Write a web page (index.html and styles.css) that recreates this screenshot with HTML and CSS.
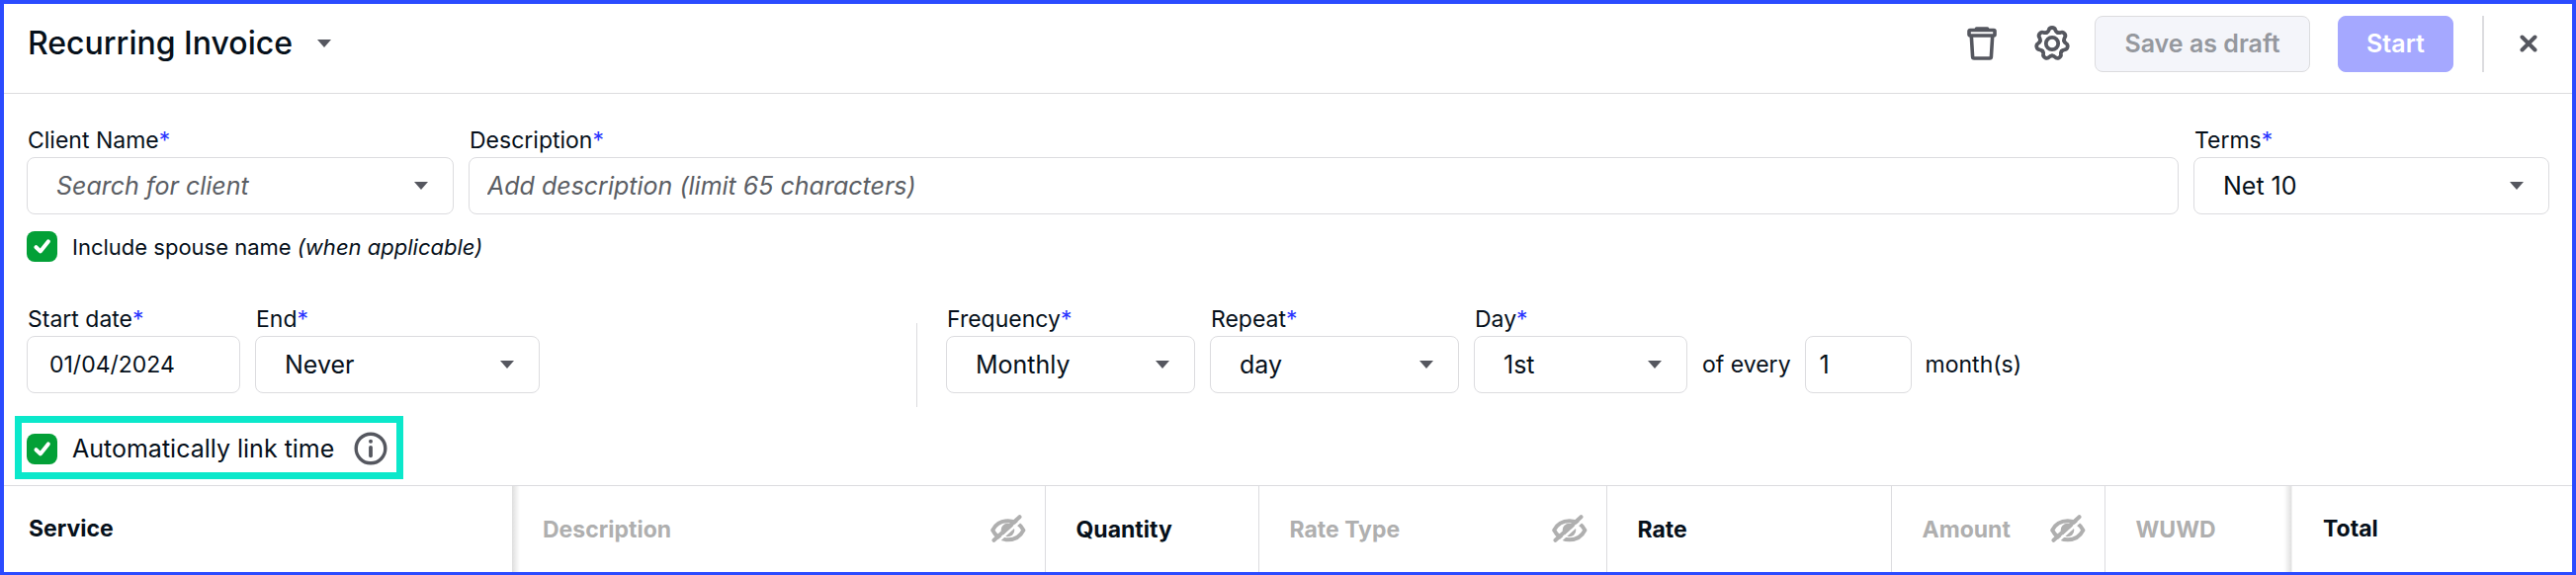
FILE: index.html
```html
<!DOCTYPE html>
<html lang="en">
<head>
<meta charset="utf-8">
<title>Recurring Invoice</title>
<link rel="stylesheet" href="styles.css">
</head>
<body>
<svg class="sprite" aria-hidden="true">
  <defs>
    <symbol id="caret" viewBox="0 0 14 8"><path d="M0 0h14L7 8z" fill="currentColor"/></symbol>
    <symbol id="check" viewBox="0 0 31 31"><path d="M9.5 16.2l4.3 4.2 8-10" fill="none" stroke="currentColor" stroke-width="4" stroke-linecap="round" stroke-linejoin="round"/></symbol>
    <symbol id="eye-off" viewBox="0 0 36 30">
      <path d="M2.200 15.700C5 10 10.500 6.300 17.800 6.300S30.600 10 33.400 15.700C30.600 21.400 25.100 25.300 17.800 25.300S5 21.400 2.200 15.700z" fill="none" stroke="currentColor" stroke-width="4" stroke-linejoin="round"/>
      <circle cx="17.500" cy="15.500" r="6.800" fill="currentColor"/>
      <path d="M6 28.500L32 5" stroke="#fff" stroke-width="2.600"/>
      <path d="M3.500 25.800L29.500 2.200" stroke="currentColor" stroke-width="4" stroke-linecap="round"/>
    </symbol>
    <path id="cog-tooth" d="M-5.380-11.170C-4-11.800-3.700-12.500-3.300-13.700C-2.900-15.200-1.600-16 0-16S2.900-15.200 3.300-13.700C3.700-12.500 4-11.800 5.380-11.170"/>
  </defs>
</svg>
<main class="page">
  <header class="topbar">
    <h1 class="title">Recurring Invoice</h1>
    <button class="icon-btn title-menu" type="button" aria-label="Change invoice type"><svg class="caret"><use href="#caret"/></svg></button>
    <div class="actions">
      <button class="icon-btn" type="button" aria-label="Delete">
        <svg width="30" height="34" viewBox="0 0 30 34" fill="none" stroke="currentColor" stroke-width="3.600" stroke-linejoin="round">
          <path d="M9.500 2h11" stroke-linecap="round"/><rect x="2" y="3.500" width="26" height="5.500" rx="1"/><path d="M4.300 9l1.300 21.500q.1 1.500 1.500 1.500h15.800q1.400 0 1.500-1.500L25.700 9"/>
        </svg>
      </button>
      <button class="icon-btn settings" type="button" aria-label="Settings">
        <svg width="36" height="36" viewBox="-18 -18 36 36" fill="none" stroke="currentColor" stroke-width="3.800" stroke-linecap="round">
          <use href="#cog-tooth"/><use href="#cog-tooth" transform="rotate(51.430)"/><use href="#cog-tooth" transform="rotate(102.860)"/><use href="#cog-tooth" transform="rotate(154.290)"/><use href="#cog-tooth" transform="rotate(205.710)"/><use href="#cog-tooth" transform="rotate(257.140)"/><use href="#cog-tooth" transform="rotate(308.570)"/>
          <circle r="6.200"/>
        </svg>
      </button>
      <button class="btn btn-draft" type="button" disabled>Save as draft</button>
      <button class="btn btn-start" type="button" disabled>Start</button>
      <span class="separator"></span>
      <button class="icon-btn" type="button" aria-label="Close">
        <svg width="18" height="18" viewBox="0 0 18 18" stroke="currentColor" stroke-width="4" stroke-linecap="round"><path d="M2.500 2.500l13 13M15.500 2.500l-13 13"/></svg>
      </button>
    </div>
  </header>

  <form class="form">
    <div class="row">
      <div class="field w-client">
        <label for="client">Client Name<span class="req">*</span></label>
        <div class="select"><select id="client" class="control empty"><option>Search for client</option></select><svg class="caret"><use href="#caret"/></svg></div>
      </div>
      <div class="field w-fill">
        <label for="description">Description<span class="req">*</span></label>
        <input id="description" class="control" type="text" placeholder="Add description (limit 65 characters)">
      </div>
      <div class="field w-terms">
        <label for="terms">Terms<span class="req">*</span></label>
        <div class="select"><select id="terms" class="control"><option>Net 10</option></select><svg class="caret"><use href="#caret"/></svg></div>
      </div>
    </div>

    <div class="option spouse">
      <span class="tick"><input id="spouse" type="checkbox" checked><svg><use href="#check"/></svg></span>
      <label for="spouse">Include spouse name <em>(when applicable)</em></label>
    </div>

    <div class="row schedule">
      <div class="row dates">
        <div class="field w-md">
          <label for="start">Start date<span class="req">*</span></label>
          <input id="start" class="control date" type="text" value="01/04/2024">
        </div>
        <div class="field w-end">
          <label for="end">End<span class="req">*</span></label>
          <div class="select"><select id="end" class="control"><option>Never</option></select><svg class="caret"><use href="#caret"/></svg></div>
        </div>
      </div>
      <span class="rule"></span>
      <div class="row repeat">
        <div class="field w-lg">
          <label for="frequency">Frequency<span class="req">*</span></label>
          <div class="select"><select id="frequency" class="control"><option>Monthly</option></select><svg class="caret"><use href="#caret"/></svg></div>
        </div>
        <div class="field w-lg">
          <label for="repeat">Repeat<span class="req">*</span></label>
          <div class="select"><select id="repeat" class="control"><option>day</option></select><svg class="caret"><use href="#caret"/></svg></div>
        </div>
        <div class="field w-md">
          <label for="day">Day<span class="req">*</span></label>
          <div class="select"><select id="day" class="control"><option>1st</option></select><svg class="caret"><use href="#caret"/></svg></div>
        </div>
        <div class="interval">
          <label for="every">of every</label>
          <input id="every" class="control count" type="text" value="1">
          <span>month(s)</span>
        </div>
      </div>
    </div>

    <div class="option highlight">
      <span class="tick"><input id="link" type="checkbox" checked><svg><use href="#check"/></svg></span>
      <label for="link">Automatically link time</label>
      <button class="icon-btn info" type="button" aria-label="More information">
        <svg width="34" height="34" viewBox="0 0 34 34" fill="none" stroke="currentColor" stroke-width="3.400" stroke-linecap="round"><circle cx="17" cy="17" r="14.800"/><path d="M17 15.800v8.500" stroke-width="3.800"/><circle cx="17" cy="9.800" r="2" fill="currentColor" stroke="none"/></svg>
      </button>
    </div>
  </form>

  <table class="items">
    <colgroup><col class="c-service"><col><col class="c-quantity"><col class="c-type"><col class="c-rate"><col class="c-amount"><col class="c-wuwd"><col class="c-total"></colgroup>
    <thead>
      <tr>
        <th scope="col" class="pin-left">Service</th>
        <th scope="col" class="muted after-pin"><div class="head">Description<svg class="eye"><use href="#eye-off"/></svg></div></th>
        <th scope="col">Quantity</th>
        <th scope="col" class="muted"><div class="head">Rate Type<svg class="eye"><use href="#eye-off"/></svg></div></th>
        <th scope="col">Rate</th>
        <th scope="col" class="muted"><div class="head">Amount<svg class="eye"><use href="#eye-off"/></svg></div></th>
        <th scope="col" class="muted before-pin">WUWD</th>
        <th scope="col" class="pin-right">Total</th>
      </tr>
    </thead>
  </table>
</main>
</body>
</html>
```
FILE: styles.css
```css
* { box-sizing: border-box; }

body {
  margin: 0;
  background: #fff;
  color: #06101a;
  font: 23px/30px Inter, "Liberation Sans", sans-serif;
}

button, input, select { font: inherit; color: inherit; }
svg { display: block; }
.sprite { position: absolute; width: 0; height: 0; }

.page {
  display: flex;
  flex-direction: column;
  min-height: 100vh;
  border: 4px solid #2b4bff;
}

/* Top bar */
.topbar {
  display: flex;
  align-items: center;
  height: 91px;
  padding: 0 35px 10px 24px;
  border-bottom: 1px solid #dcdcdf;
}
.title { margin: 0; font-size: 32px; line-height: 40px; font-weight: 500; }
.title-menu { margin-left: 25px; }
.icon-btn { padding: 0; border: 0; background: none; color: #55575f; }
.caret { width: 14px; height: 8px; color: #55575f; }
.actions { display: flex; align-items: center; margin-left: auto; }
.settings { margin: 0 25px 0 38px; }
.btn {
  height: 57px;
  border: 1px solid #dcdcdf;
  border-radius: 8px;
  font-size: 25px;
  font-weight: 600;
}
.btn-draft { width: 218px; background: #f4f5fa; color: #95989e; }
.btn-start { width: 117px; margin-left: 28px; border-color: #a5a8ff; background: #a5a8ff; color: #fff; }
.separator { width: 2px; height: 57px; margin: 0 36px 0 29px; background: #dcdcdf; }

/* Form */
.form { padding: 32px 23px 6px; }
.row { display: flex; align-items: flex-start; gap: 15px; }
.field { display: flex; flex-direction: column; gap: 2px; }
.field > label { padding-left: 1px; }
.req { color: #2b35ff; }
.w-client { width: 432px; }
.w-fill { flex: 1; }
.w-terms { width: 360px; }
.w-md { width: 216px; }
.w-end { width: 288px; }
.w-lg { width: 252px; }

.control {
  width: 100%;
  height: 58px;
  padding: 0 18px;
  border: 1px solid #dcdcdf;
  border-radius: 8px;
  background: #fff;
  font-size: 25px;
  outline: none;
}
.control::placeholder, .empty { color: #5b5e64; font-style: italic; opacity: 1; }
.select { position: relative; }
.select .control { appearance: none; padding: 0 48px 0 29px; }
.select .caret { position: absolute; top: 25px; right: 26px; pointer-events: none; }
.control.date { padding-left: 22px; font-size: 23px; }

.option { display: flex; align-items: center; gap: 15px; }
.spouse { margin: 17px 0 43px; font-size: 22px; }
.tick { position: relative; width: 31px; height: 31px; color: #fff; }
.tick input { display: block; appearance: none; width: 31px; height: 31px; margin: 0; border-radius: 8px; background: #03a037; }
.tick svg { position: absolute; inset: 0; width: 31px; height: 31px; pointer-events: none; }

.schedule { gap: 0; }
.dates { flex: 0 0 900px; }
.rule { width: 1px; height: 85px; margin: 19px 29px 0 0; background: #dcdcdf; }
.repeat { align-items: flex-end; }
.interval { display: flex; align-items: center; gap: 14px; }
.count { width: 108px; padding: 0 14px; }

.highlight {
  width: max-content;
  height: 64px;
  margin: 9px 0 0 -12px;
  padding: 2px 9px 0 5px;
  border: 7px solid #0be8cb;
  font-size: 25px;
}
.info { margin-left: 5px; }

/* Line items */
.items { flex: 1; width: 100%; border-collapse: collapse; table-layout: fixed; }
.items th {
  height: 87px;
  padding: 2px 19px 0 31px;
  border-top: 1px solid #dcdcdf;
  border-left: 1px solid #dcdcdf;
  text-align: left;
  font-weight: 700;
}
.items .muted { color: #afafaf; }
.items .pin-left { padding: 0 25px; border-left: 0; }
.items .pin-right { padding-top: 0; border-left: 0; }
.items .after-pin { border-left: 0; background: linear-gradient(to right, #dedede, #fff 8px); }
.items .before-pin { background: linear-gradient(to left, #dedede, #fff 8px); }
.head { display: flex; align-items: center; justify-content: space-between; }
.eye { width: 36px; height: 30px; }
.c-service { width: 514px; }
.c-quantity { width: 216px; }
.c-type { width: 352px; }
.c-rate { width: 288px; }
.c-amount { width: 216px; }
.c-wuwd { width: 190px; }
.c-total { width: 283px; }
```
